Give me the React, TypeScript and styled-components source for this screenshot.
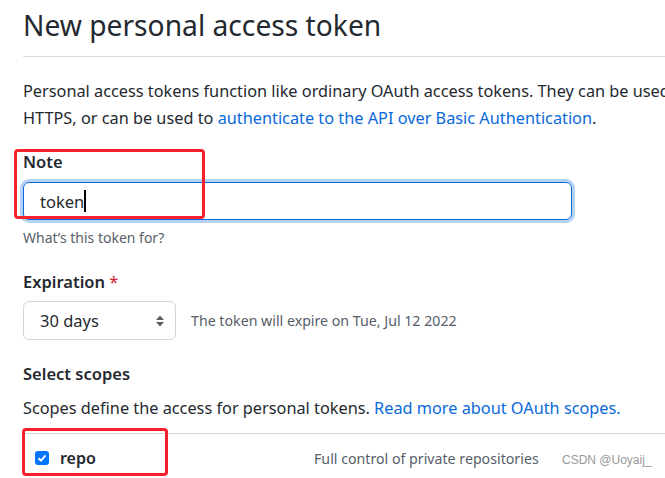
import React from 'react';
import styled, { createGlobalStyle } from 'styled-components';

const GlobalStyle = createGlobalStyle`
  html, body {
    margin: 0;
    padding: 0;
    background: #fff;
  }
  body {
    width: 665px;
    height: 478px;
    overflow: hidden;
    font-family: "Noto Sans", "Open Sans", sans-serif;
    color: #24292f;
  }
`;

const Page = styled.div`
  position: relative;
  width: 665px;
  height: 478px;
  overflow: hidden;
`;

const Content = styled.div`
  padding: 3px 0 0 23px;
`;

const Title = styled.h1`
  margin: 0;
  font-size: 28.2px;
  font-weight: 400;
  line-height: 44px;
  padding-bottom: 9px;
  border-bottom: 1px solid #d8dee4;
  white-space: nowrap;
`;

const Lead = styled.p<{ $top: number }>`
  margin: ${p => p.$top}px 0 0;
  font-size: 16.3px;
  line-height: 27px;
  white-space: nowrap;
`;

const Link = styled.a`
  color: #0969da;
  text-decoration: none;
`;

const Group = styled.div<{ $top: number }>`
  margin-top: ${p => p.$top}px;
`;

const Label = styled.div`
  font-size: 16.5px;
  font-weight: 600;
  line-height: 24px;
`;

const Star = styled.span`
  color: #cf222e;
  font-weight: 400;
`;

const NoteInput = styled.div`
  margin-top: 8px;
  width: 549px;
  height: 38px;
  box-sizing: border-box;
  border: 1px solid #0969da;
  border-radius: 6px;
  box-shadow: 0 0 0 3px rgba(9, 105, 218, 0.3);
  display: flex;
  align-items: center;
  padding-left: 16px;
  font-size: 16.5px;
`;

const Caret = styled.span`
  display: inline-block;
  width: 2px;
  height: 22px;
  background: #000;
`;

const Hint = styled.div`
  margin-top: 8px;
  font-size: 14px;
  color: #57606a;
  line-height: 20px;
`;

const SelectRow = styled.div`
  margin-top: 7px;
  display: flex;
  align-items: center;
  gap: 15px;
`;

const SelectBox = styled.div`
  width: 153px;
  height: 39px;
  box-sizing: border-box;
  border: 1px solid #d0d7de;
  border-radius: 6px;
  display: flex;
  align-items: center;
  justify-content: space-between;
  padding: 0 10px 0 16px;
  font-size: 16.5px;
`;

const Muted = styled.span`
  color: #57606a;
  font-size: 14.2px;
`;

const ScopeRow = styled.div`
  margin-top: 11px;
  border-top: 1px solid #d0d7de;
  display: flex;
  align-items: center;
  height: 48px;
  padding-left: 12px;
`;

const Check = styled.span`
  width: 14px;
  height: 14px;
  border-radius: 3px;
  background: #0075ff;
  display: inline-flex;
  align-items: center;
  justify-content: center;
`;

const ScopeName = styled.span`
  margin-left: 11px;
  width: 254px;
  font-size: 16px;
  font-weight: 600;
`;

const Watermark = styled.span`
  position: absolute;
  left: 562px;
  top: 453px;
  font-family: "Liberation Sans", Arial, sans-serif;
  font-size: 12px;
  color: #999;
`;

const RedBox = styled.div<{ $x: number; $y: number; $w: number; $h: number }>`
  position: absolute;
  left: ${p => p.$x}px;
  top: ${p => p.$y}px;
  width: ${p => p.$w}px;
  height: ${p => p.$h}px;
  box-sizing: border-box;
  border: 3px solid #f5222d;
  border-radius: 4px;
`;

export default function App() {
  return (
    <Page>
      <GlobalStyle />
      <Content>
        <Title>New personal access token</Title>
        <Lead $top={21}>
          Personal access tokens function like ordinary OAuth access tokens. They can be used instead of a password for Git over
          <br />
          HTTPS, or can be used to <Link href="#">authenticate to the API over Basic Authentication</Link>.
        </Lead>

        <Group $top={18}>
          <Label>Note</Label>
          <NoteInput>
            token<Caret />
          </NoteInput>
          <Hint>What’s this token for?</Hint>
        </Group>

        <Group $top={22}>
          <Label>
            Expiration <Star>*</Star>
          </Label>
          <SelectRow>
            <SelectBox>
              30 days
              <svg width="10" height="14" viewBox="0 0 10 14">
                <path d="M1 6 L5 1.5 L9 6 Z M1 8 L5 12.5 L9 8 Z" fill="#57606a" />
              </svg>
            </SelectBox>
            <Muted>The token will expire on Tue, Jul 12 2022</Muted>
          </SelectRow>
        </Group>

        <Group $top={22}>
          <Label>Select scopes</Label>
          <Lead $top={9}>
            Scopes define the access for personal tokens. <Link href="#">Read more about OAuth scopes.</Link>
          </Lead>
          <ScopeRow>
            <Check>
              <svg width="10" height="10" viewBox="0 0 10 10">
                <path d="M1.5 5.2 L4 7.6 L8.6 2.4" stroke="#fff" strokeWidth="1.9" fill="none" />
              </svg>
            </Check>
            <ScopeName>repo</ScopeName>
            <Muted>Full control of private repositories</Muted>
          </ScopeRow>
        </Group>
      </Content>

      <RedBox $x={14} $y={149} $w={191} $h={70} />
      <RedBox $x={22} $y={428} $w={146} $h={48} />
      <Watermark>CSDN @Uoyaij_</Watermark>
    </Page>
  );
}
